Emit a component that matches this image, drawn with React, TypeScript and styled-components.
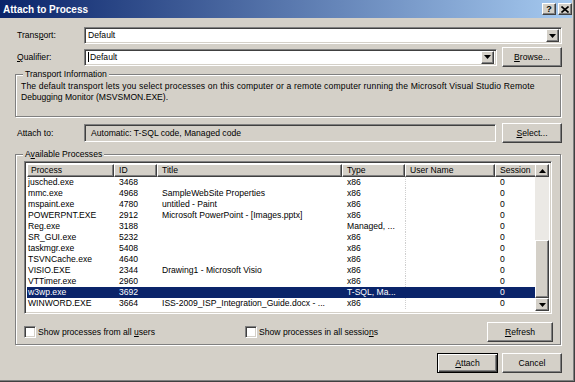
import React from 'react';
import styled, { createGlobalStyle, css } from 'styled-components';

const face = '#d4d0c8';
const shade = '#808080';
const dark = '#404040';
const navy = '#0a246a';

const GlobalStyle = createGlobalStyle`
  html, body {
    margin: 0;
    padding: 0;
    background: ${face};
  }
  body {
    font-family: 'Liberation Sans', Arial, sans-serif;
    font-size: 8.6px;
    line-height: 11px;
    color: #000;
  }
  * {
    box-sizing: border-box;
  }
`;

const raised = css`
  border: 1px solid;
  border-color: #fff ${dark} ${dark} #fff;
  box-shadow: inset -1px -1px ${shade};
  background: ${face};
`;

const sunken = css`
  border: 1px solid;
  border-color: ${shade} #fff #fff ${shade};
  box-shadow: inset 1px 1px ${dark}, inset -1px -1px ${face};
`;

const Window = styled.div`
  width: 575px;
  height: 382px;
  padding: 0 3px 3px 0;
  background: ${face};
  box-shadow: inset -1px -1px ${dark}, inset -2px -2px ${shade};
  display: flex;
  flex-direction: column;
`;

const TitleBar = styled.div`
  height: 18px;
  display: flex;
  align-items: center;
  gap: 2px;
  padding: 0 0 0 3px;
  background: linear-gradient(to right, ${navy}, #a6caf0);
`;

const TitleText = styled.div`
  flex: 1;
  color: #fff;
  font-weight: bold;
  font-size: 10px;
`;

const CaptionButton = styled.div`
  ${raised};
  width: 14px;
  height: 12px;
  display: flex;
  align-items: center;
  justify-content: center;
  font-weight: bold;
  font-size: 9px;
  line-height: 9px;
`;

const Body = styled.div`
  flex: 1;
  display: flex;
  flex-direction: column;
  padding: 9px 10px 0 15px;
`;

const Row = styled.div<{ $height: number; $top: number }>`
  display: flex;
  align-items: center;
  height: ${(p) => p.$height}px;
  margin-top: ${(p) => p.$top}px;
`;

const Label = styled.div`
  width: 69px;
  padding-left: 2px;
  white-space: nowrap;
`;

const Key = styled.span`
  text-decoration: underline;
`;

const Combo = styled.div<{ $width?: number }>`
  ${sunken};
  background: #fff;
  height: 17px;
  display: flex;
  align-items: center;
  padding: 2px 2px 2px 3px;
  flex: ${(p) => (p.$width ? 'none' : 1)};
  width: ${(p) => (p.$width ? `${p.$width}px` : 'auto')};
`;

const ComboText = styled.div`
  flex: 1;
  display: flex;
  align-items: center;
`;

const Caret = styled.span`
  width: 1px;
  height: 10px;
  background: #000;
  margin-right: 1px;
`;

const ArrowButton = styled.div<{ $height?: number; $width?: number }>`
  ${raised};
  width: ${(p) => p.$width ?? 13}px;
  height: ${(p) => p.$height ?? 13}px;
  display: flex;
  align-items: center;
  justify-content: center;
`;

const Button = styled.div<{ $width: number; $default?: boolean; $gap?: number }>`
  ${raised};
  width: ${(p) => p.$width}px;
  height: 20px;
  margin-left: ${(p) => p.$gap ?? 0}px;
  display: flex;
  align-items: center;
  justify-content: center;
  flex: none;
  ${(p) =>
    p.$default &&
    css`
      border-color: #000;
      box-shadow: inset 1px 1px #fff, inset -1px -1px ${dark}, inset -2px -2px ${shade};
    `}
`;

const ReadOnlyField = styled.div`
  ${sunken};
  width: 412px;
  height: 18px;
  display: flex;
  align-items: center;
  padding-left: 6px;
  margin-right: 6px;
`;

const Group = styled.fieldset<{ $height: number; $top: number }>`
  margin: ${(p) => p.$top}px 1px 0 0;
  padding: 1px 8px 0 5px;
  min-width: 0;
  height: ${(p) => p.$height}px;
  border: 1px solid ${shade};
  box-shadow: inset 1px 1px #fff, 1px 1px #fff;
`;

const Legend = styled.legend`
  padding: 0 2px;
  margin-left: 2px;
  background: ${face};
  line-height: 11px;
`;

const InfoText = styled.div<{ $spacing?: number }>`
  white-space: nowrap;
  letter-spacing: ${(p) => p.$spacing ?? 0}px;
`;

const List = styled.div`
  ${sunken};
  margin-left: 3px;
  width: 528px;
  height: 153px;
  background: #fff;
  display: flex;
  padding: 2px;
`;

const Table = styled.div`
  width: 510px;
  display: flex;
  flex-direction: column;
  overflow: hidden;
`;

const columns = '87px 43px 185px 63px 90px 42px';

const HeaderRow = styled.div`
  display: grid;
  grid-template-columns: ${columns};
  height: 13px;
`;

const HeaderCell = styled.div<{ $first?: boolean }>`
  ${raised};
  padding-left: ${(p) => (p.$first ? 3 : 4)}px;
  line-height: 10px;
  white-space: nowrap;
`;

const DataRow = styled.div<{ $selected?: boolean }>`
  display: grid;
  grid-template-columns: ${columns};
  height: 11px;
  background: ${(p) => (p.$selected ? navy : 'transparent')};
  color: ${(p) => (p.$selected ? '#fff' : '#000')};
`;

const Cell = styled.div<{ $first?: boolean; $grid?: boolean }>`
  padding-left: ${(p) => (p.$first ? 1 : 5)}px;
  white-space: nowrap;
  overflow: hidden;
  ${(p) => p.$grid && css`border-left: 1px dotted #cfcfcf;`}
`;

const ScrollBar = styled.div`
  width: 14px;
  display: flex;
  flex-direction: column;
`;

const Track = styled.div`
  flex: 1;
  background: #ebe9e5;
`;

const Thumb = styled.div`
  ${raised};
  height: 58px;
`;

const CheckRow = styled.div`
  display: flex;
  align-items: center;
  height: 20px;
  margin: 8px 0 0 3px;
  width: 529px;
`;

const CheckItem = styled.div<{ $width?: number }>`
  display: flex;
  align-items: center;
  gap: 2px;
  width: ${(p) => (p.$width ? `${p.$width}px` : 'auto')};
  flex: ${(p) => (p.$width ? 'none' : 1)};
`;

const CheckBox = styled.div`
  ${sunken};
  width: 12px;
  height: 12px;
  background: #fff;
`;

const Footer = styled.div`
  display: flex;
  justify-content: flex-end;
  gap: 4px;
  margin-top: 8px;
`;

const Down = () => (
  <svg width="7" height="4" viewBox="0 0 7 4">
    <path d="M0 0h7L3.5 4z" fill="#000" />
  </svg>
);

const Up = () => (
  <svg width="7" height="4" viewBox="0 0 7 4">
    <path d="M0 4h7L3.5 0z" fill="#000" />
  </svg>
);

const CloseGlyph = () => (
  <svg width="8" height="7" viewBox="0 0 8 7">
    <path d="M0.5 0.5l7 6M7.5 0.5l-7 6" stroke="#000" strokeWidth="1.6" />
  </svg>
);

const processes = [
  { name: 'jusched.exe', id: 3468, title: '', type: 'x86' },
  { name: 'mmc.exe', id: 4968, title: 'SampleWebSite Properties', type: 'x86' },
  { name: 'mspaint.exe', id: 4780, title: 'untitled - Paint', type: 'x86' },
  { name: 'POWERPNT.EXE', id: 2912, title: 'Microsoft PowerPoint - [Images.pptx]', type: 'x86' },
  { name: 'Reg.exe', id: 3188, title: '', type: 'Managed, ...' },
  { name: 'SR_GUI.exe', id: 5232, title: '', type: 'x86' },
  { name: 'taskmgr.exe', id: 5408, title: '', type: 'x86' },
  { name: 'TSVNCache.exe', id: 4640, title: '', type: 'x86' },
  { name: 'VISIO.EXE', id: 2344, title: 'Drawing1 - Microsoft Visio', type: 'x86' },
  { name: 'VTTimer.exe', id: 2960, title: '', type: 'x86' },
  { name: 'w3wp.exe', id: 3692, title: '', type: 'T-SQL, Ma...', selected: true },
  { name: 'WINWORD.EXE', id: 3664, title: 'ISS-2009_ISP_Integration_Guide.docx - ...', type: 'x86' },
];

export default function App() {
  return (
    <>
      <GlobalStyle />
      <Window>
        <TitleBar>
          <TitleText>Attach to Process</TitleText>
          <CaptionButton>?</CaptionButton>
          <CaptionButton>
            <CloseGlyph />
          </CaptionButton>
        </TitleBar>
        <Body>
          <Row $height={17} $top={0}>
            <Label>
              Trans<Key>p</Key>ort:
            </Label>
            <Combo>
              <ComboText>Default</ComboText>
              <ArrowButton>
                <Down />
              </ArrowButton>
            </Combo>
          </Row>
          <Row $height={20} $top={3}>
            <Label>
              <Key>Q</Key>ualifier:
            </Label>
            <Combo $width={413}>
              <ComboText>
                <Caret />
                Default
              </ComboText>
              <ArrowButton>
                <Down />
              </ArrowButton>
            </Combo>
            <Button $width={60} $gap={5}>
              <span>
                <Key>B</Key>rowse...
              </span>
            </Button>
          </Row>
          <Group $height={48} $top={2}>
            <Legend>Transport Information</Legend>
            <InfoText $spacing={0.14}>
              The default transport lets you select processes on this computer or a remote computer running the
              Microsoft Visual Studio Remote
            </InfoText>
            <InfoText>Debugging Monitor (MSVSMON.EXE).</InfoText>
          </Group>
          <Row $height={20} $top={6}>
            <Label>Attach to:</Label>
            <ReadOnlyField>Automatic: T-SQL code, Managed code</ReadOnlyField>
            <Button $width={60}>
              <span>
                <Key>S</Key>elect...
              </span>
            </Button>
          </Row>
          <Group $height={196} $top={6}>
            <Legend>
              A<Key>v</Key>ailable Processes
            </Legend>
            <List>
              <Table>
                <HeaderRow>
                  <HeaderCell $first>Process</HeaderCell>
                  <HeaderCell>ID</HeaderCell>
                  <HeaderCell>Title</HeaderCell>
                  <HeaderCell>Type</HeaderCell>
                  <HeaderCell>User Name</HeaderCell>
                  <HeaderCell>Session</HeaderCell>
                </HeaderRow>
                {processes.map((p) => (
                  <DataRow key={p.id} $selected={p.selected}>
                    <Cell $first>{p.name}</Cell>
                    <Cell>{p.id}</Cell>
                    <Cell>{p.title}</Cell>
                    <Cell>{p.type}</Cell>
                    <Cell $grid={!p.selected} />
                    <Cell>0</Cell>
                  </DataRow>
                ))}
              </Table>
              <ScrollBar>
                <ArrowButton $height={13} $width={14}>
                  <Up />
                </ArrowButton>
                <Track />
                <Thumb />
                <ArrowButton $height={13} $width={14}>
                  <Down />
                </ArrowButton>
              </ScrollBar>
            </List>
            <CheckRow>
              <CheckItem $width={221}>
                <CheckBox />
                <span>
                  Show processes from all <Key>u</Key>sers
                </span>
              </CheckItem>
              <CheckItem>
                <CheckBox />
                <span>
                  Show processes in all sessio<Key>n</Key>s
                </span>
              </CheckItem>
              <Button $width={66}>
                <span>
                  <Key>R</Key>efresh
                </span>
              </Button>
            </CheckRow>
          </Group>
          <Footer>
            <Button $width={61} $default>
              <span>
                <Key>A</Key>ttach
              </span>
            </Button>
            <Button $width={60}>Cancel</Button>
          </Footer>
        </Body>
      </Window>
    </>
  );
}
